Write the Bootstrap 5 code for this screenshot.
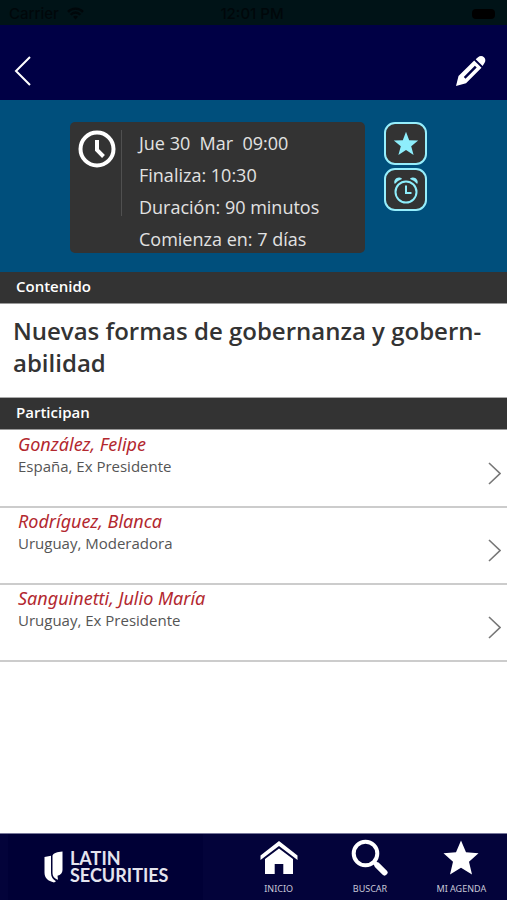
<!DOCTYPE html>
<html lang="es">
<head>
<meta charset="utf-8">
<meta name="viewport" content="width=device-width, initial-scale=1">
<title>Nuevas formas de gobernanza y gobernabilidad</title>
<link href="https://cdn.jsdelivr.net/npm/bootstrap@5.3.0/dist/css/bootstrap.min.css" rel="stylesheet">
<style>
  body { font-family: "Open Sans", "Noto Sans", sans-serif; color: #333; background: #fff; }
  svg { display: block; flex: none; }
  .status-bar { height: 25px; padding: 2px 12px 0 9px; background: #001317; color: #00070a; font: 500 15px/24px Inter, "Liberation Sans", sans-serif; }
  .status-side { flex: 1 1 0; }
  .battery { width: 23px; height: 10px; border-radius: 4px; background: #000; }
  .top-bar { height: 75px; padding: 16px 20px 0 14px; background: #000045; color: #fff; }
  .schedule { padding: 22px 80px 19px 70px; gap: 19px; background: #004f7c; }
  .time-box { padding: 8px 8px 2px 8px; gap: 5px; border-radius: 5px; background: #333; color: #e2e2e2; }
  .time-rule { width: 1px; height: 86px; background: #505050; }
  .time-lines { padding: 1px 0 0 12px; gap: 8px; font-size: 18px; line-height: 24px; white-space: pre; }
  .tool { width: 43px; height: 43px; border: 2px solid #96eefc; border-radius: 11px; background: #333; color: #8eeefc; }
  .tool-stack { gap: 3px; }
  .section-bar { height: 32px; padding: 0 16px; background: #333; color: #fff; border-bottom: 1px solid #999; font-size: 15px; line-height: 29px; font-weight: 600; }
  .talk-title { padding: 11px 13px 18px; font-size: 24px; line-height: 32px; font-weight: 600; border-bottom: 1px solid #aaa; hyphens: manual; }
  .people { padding-top: 1px; }
  .person { height: 77px; padding: 1px 6px 0 18px; border-bottom: 2px solid #ccc; color: #555; text-decoration: none; }
  .person-name { color: #b3282f; font-family: "Noto Sans", sans-serif; font-size: 18px; line-height: 24px; font-style: italic; }
  .person-role { font-size: 15px; line-height: 21px; }
  .person svg { margin-top: 8px; }
  .bottom-bar { height: 67px; background: #03033a; border-top: 1px solid #77779a; color: #fff; }
  .brand-box { width: 195px; margin-left: 8px; padding-left: 36px; gap: 7px; background: #000036; color: #fff; font-size: 18px; line-height: 17px; font-weight: 700; text-decoration: none; }
  .brand-box span { color: #e4e4ee; font-family: Lato, sans-serif; }
  .tabs { padding-left: 30px; }
  .tab-link { flex: 1 1 0; padding-top: 5px; color: #c8c8d8; font-family: "Noto Sans", sans-serif; font-size: 9px; line-height: 12px; text-decoration: none; gap: 7px; white-space: nowrap; }
  .tab-link svg { color: #fff; }
</style>
</head>
<body class="d-flex flex-column min-vh-100">
<div class="status-bar d-flex align-items-center">
  <div class="status-side d-flex align-items-center gap-2"><span>Carrier</span>
    <svg width="17" height="13" viewBox="0 0 17 13" fill="none" stroke="currentColor" stroke-width="2.4"><path d="M1 4.8C5 .6 12 .6 16 4.8M3.6 7.8c2.8-3 7-3 9.8 0"/><path d="M8.500 12.500 6 9.700c1.500-1.400 3.500-1.400 5 0Z" fill="currentColor" stroke="none"/></svg>
  </div>
  <span>12:01 PM</span>
  <div class="status-side d-flex justify-content-end"><div class="battery"></div></div>
</div>
<header class="top-bar d-flex justify-content-between align-items-center">
  <button type="button" class="btn p-0 border-0 text-white" aria-label="Volver">
    <svg width="18" height="30" viewBox="0 0 18 30" fill="none" stroke="currentColor" stroke-width="2"><path d="M16 1 2 15l14 14"/></svg>
  </button>
  <button type="button" class="btn p-0 border-0 text-white" aria-label="Editar">
    <svg width="32" height="32" viewBox="0 0 32 32" fill="currentColor"><path fill-rule="evenodd" d="M1 31 3.500 21 19.200 5.500 26.500 12.800 11 28.300ZM8.800 21.900l1.700 1.800L21.700 12.500l-1.800-1.800Z"/><path d="M20.700 4.200 23 2.200c2-1.700 4.400-1.500 6 .1s1.900 4 .3 6L27.600 10.900Z"/></svg>
  </button>
</header>
<main class="flex-grow-1">
  <section class="schedule d-flex align-items-start">
    <div class="time-box d-flex flex-grow-1">
      <svg width="38" height="38" viewBox="0 0 38 38" fill="none" stroke="#fff"><circle cx="19" cy="19" r="16.500" stroke-width="4"/><path d="M19 10v10l6.500 6.500" stroke-width="4"/></svg>
      <div class="time-rule"></div>
      <div class="time-lines d-flex flex-column"><div>Jue 30  Mar  09:00</div><div>Finaliza: 10:30</div><div>Duración: 90 minutos</div><div>Comienza en: 7 días</div></div>
    </div>
    <div class="tool-stack d-flex flex-column flex-shrink-0">
      <button type="button" class="tool p-0 d-flex align-items-center justify-content-center" aria-label="Agregar a mi agenda">
        <svg width="26" height="26" viewBox="0 0 26 26" fill="currentColor"><path d="m13 .8 3.200 8.400 9 .4-7 5.600 2.400 8.700L13 19l-7.600 4.900 2.400-8.700-7-5.600 9-.4Z"/></svg>
      </button>
      <button type="button" class="tool p-0 d-flex align-items-center justify-content-center" aria-label="Recordatorio">
        <svg width="26" height="28" viewBox="0 0 26 28" fill="none" stroke="currentColor" stroke-width="2"><circle cx="13" cy="16" r="10.500"/><path d="M13 9.500V17h5.500"/><path d="M1.800 8C0 5 3 1.200 6.500 1.600c1.300.1 2 .6 2.500 1.400Q4.500 4.500 1.800 8ZM24.200 8C26 5 23 1.200 19.500 1.600c-1.300.1-2 .6-2.500 1.400q4.500 1.500 7.200 5Z" fill="currentColor" stroke="none"/></svg>
      </button>
    </div>
  </section>
  <h2 class="section-bar m-0">Contenido</h2>
  <h1 class="talk-title m-0">Nuevas formas de gobernanza y gobern&shy;abilidad</h1>
  <h2 class="section-bar m-0">Participan</h2>
  <nav class="people" aria-label="Participantes">
    <a href="#gonzalez" class="person d-flex justify-content-between">
      <div><div class="person-name">González, Felipe</div><div class="person-role">España, Ex Presidente</div></div>
      <svg class="align-self-center" width="13" height="23" viewBox="0 0 13 23" fill="none" stroke="#777" stroke-width="1.600"><path d="m1 1 11 10.500L1 22"/></svg>
    </a>
    <a href="#rodriguez" class="person d-flex justify-content-between">
      <div><div class="person-name">Rodríguez, Blanca</div><div class="person-role">Uruguay, Moderadora</div></div>
      <svg class="align-self-center" width="13" height="23" viewBox="0 0 13 23" fill="none" stroke="#777" stroke-width="1.600"><path d="m1 1 11 10.500L1 22"/></svg>
    </a>
    <a href="#sanguinetti" class="person d-flex justify-content-between">
      <div><div class="person-name">Sanguinetti, Julio María</div><div class="person-role">Uruguay, Ex Presidente</div></div>
      <svg class="align-self-center" width="13" height="23" viewBox="0 0 13 23" fill="none" stroke="#777" stroke-width="1.600"><path d="m1 1 11 10.500L1 22"/></svg>
    </a>
  </nav>
</main>
<footer class="bottom-bar d-flex">
  <a href="#latin" class="brand-box d-flex align-items-center flex-shrink-0">
    <svg width="19" height="32" viewBox="0 0 19 32" fill="currentColor"><path d="M.5 6 7 4.800V22c0 4 2 6.500 5 8.200L10 31.500C4 30 .5 27 .5 21.500Z"/><path d="M8.500 4.500C10 2 13 .8 18.500.5V19c0 3-2 5-5 5.800l.5 4c-4-1.300-5.500-3.800-5.500-7.300Z"/></svg>
    <span>LATIN<br>SECURITIES</span>
  </a>
  <nav class="tabs d-flex flex-grow-1" aria-label="Principal">
    <a href="#inicio" class="tab-link d-flex flex-column align-items-center">
      <svg width="38" height="37" viewBox="0 0 38 37" fill="currentColor"><path d="M19 2 37.500 16.500V21L19 7 .5 21v-4.500Z"/><path d="M19 9.500 33 20v15H23.300V25h-8.600v10H5V20Z"/></svg>INICIO</a>
    <a href="#buscar" class="tab-link d-flex flex-column align-items-center">
      <svg width="37" height="37" viewBox="0 0 37 37" fill="none" stroke="currentColor"><circle cx="14.500" cy="14.500" r="11.800" stroke-width="4"/><path d="m23 23 3.500 3.500" stroke-width="4"/><path d="m26.500 26.500 7 7" stroke-width="6" stroke-linecap="round"/></svg>BUSCAR</a>
    <a href="#agenda" class="tab-link d-flex flex-column align-items-center">
      <svg width="36" height="37" viewBox="0 0 36 37" fill="currentColor"><path d="m18 1.500 5 11.700 12.500 1-9.500 8.600 3 12.700-11-6.800-11 6.800 3-12.700L.5 14.200l12.500-1Z"/></svg>MI AGENDA</a>
  </nav>
</footer>
<script src="https://cdn.jsdelivr.net/npm/bootstrap@5.3.0/dist/js/bootstrap.bundle.min.js"></script>
</body>
</html>
